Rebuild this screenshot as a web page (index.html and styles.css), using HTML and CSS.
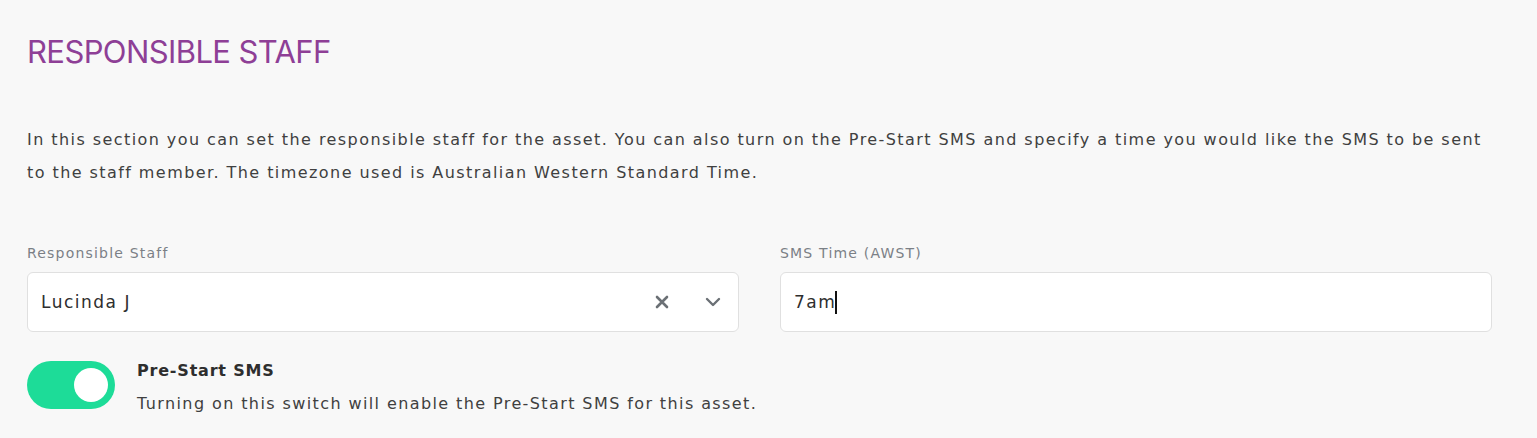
FILE: index.html
```html
<!DOCTYPE html>
<html>
<head>
<meta charset="utf-8">
<link rel="stylesheet" href="styles.css">
</head>
<body>
<section class="section">
  <h2 class="title">RESPONSIBLE STAFF</h2>
  <p class="intro">In this section you can set the responsible staff for the asset. You can also turn on the Pre-Start SMS and specify a time you would like the SMS to be sent to the staff member. The timezone used is Australian Western Standard Time.</p>
  <div class="fields">
    <div class="field">
      <label class="label">Responsible Staff</label>
      <div class="control select">
        <span class="value">Lucinda J</span>
        <span class="icons">
          <svg class="icon-x" width="14" height="14" viewBox="0 0 14 14"><path d="M2 2 L12 12 M12 2 L2 12" stroke="#6b7075" stroke-width="2.6" stroke-linecap="round"/></svg>
          <svg class="icon-chev" width="16" height="10" viewBox="0 0 16 10"><path d="M2 2 L8 8 L14 2" stroke="#6b7075" stroke-width="2.4" fill="none" stroke-linecap="round" stroke-linejoin="round"/></svg>
        </span>
      </div>
    </div>
    <div class="field">
      <label class="label">SMS Time (AWST)</label>
      <div class="control">
        <span class="value">7am</span><span class="caret"></span>
      </div>
    </div>
  </div>
  <div class="switch-row">
    <span class="switch"><span class="knob"></span></span>
    <div class="switch-text">
      <div class="switch-title">Pre-Start SMS</div>
      <div class="switch-desc">Turning on this switch will enable the Pre-Start SMS for this asset.</div>
    </div>
  </div>
</section>
</body>
</html>
```

FILE: styles.css
```css
html, body {
  margin: 0;
  padding: 0;
  background: #f8f8f8;
}
body {
  font-family: "DejaVu Sans", "Noto Sans", sans-serif;
  color: #3b3b3b;
}
.section {
  padding: 30px 45px 0 27px;
}
.title {
  margin: 0;
  font-family: "Inter", "Noto Sans", sans-serif;
  font-size: 31px;
  font-weight: 400;
  color: #8e3f96;
  line-height: 44px;
  letter-spacing: -0.6px;
}
.intro {
  margin: 49px 0 0 0;
  font-size: 16px;
  line-height: 33px;
  color: #404040;
  letter-spacing: 1.43px;
}
.fields {
  display: grid;
  grid-template-columns: 1fr 1fr;
  column-gap: 41px;
  margin-top: 54px;
}
.label {
  display: block;
  font-size: 14px;
  color: #7b8086;
  line-height: 20px;
  margin-bottom: 9px;
  letter-spacing: 1.2px;
}
.control {
  height: 60px;
  box-sizing: border-box;
  background: #fff;
  border: 1px solid #e0e0e0;
  border-radius: 6px;
  display: flex;
  align-items: center;
  padding: 0 13px;
  font-size: 17px;
  color: #2e2e2e;
  letter-spacing: 1.5px;
}
.select .value {
  flex: 1;
}
.icons {
  display: flex;
  align-items: center;
  gap: 36px;
  padding-right: 4px;
}
.caret {
  display: inline-block;
  width: 2px;
  height: 23px;
  background: #111;
  margin-left: -1px;
}
.switch-row {
  display: flex;
  align-items: flex-start;
  gap: 22px;
  margin-top: 29px;
}
.switch {
  width: 88px;
  height: 48px;
  border-radius: 24px;
  background: #1ddc98;
  display: flex;
  align-items: center;
  justify-content: flex-end;
  padding-right: 7px;
  box-sizing: border-box;
  flex: none;
}
.knob {
  width: 34px;
  height: 34px;
  border-radius: 50%;
  background: #fff;
}
.switch-title {
  font-size: 16px;
  font-weight: 700;
  color: #2e2e2e;
  line-height: 20px;
  margin-top: 0;
  letter-spacing: 0.8px;
}
.switch-desc {
  font-size: 16px;
  color: #404040;
  line-height: 24px;
  margin-top: 11px;
  letter-spacing: 1.4px;
}
```
